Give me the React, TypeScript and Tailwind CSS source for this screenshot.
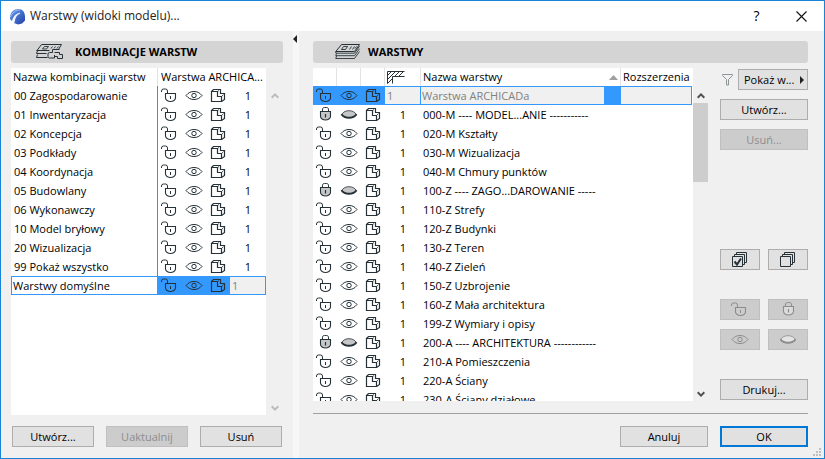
import { useState } from "react";
import type { ReactNode } from "react";
import clsx from "clsx";

const COMBINATIONS = [
  "00 Zagospodarowanie",
  "01 Inwentaryzacja",
  "02 Koncepcja",
  "03 Podkłady",
  "04 Koordynacja",
  "05 Budowlany",
  "06 Wykonawczy",
  "10 Model bryłowy",
  "20 Wizualizacja",
  "99 Pokaż wszystko",
];

type Layer = { name: string; locked?: boolean };

const LAYERS: Layer[] = [
  { name: "000-M ---- MODEL...ANIE -----------", locked: true },
  { name: "020-M Kształty" },
  { name: "030-M Wizualizacja" },
  { name: "040-M Chmury punktów" },
  { name: "100-Z ---- ZAGO...DAROWANIE -----", locked: true },
  { name: "110-Z Strefy" },
  { name: "120-Z Budynki" },
  { name: "130-Z Teren" },
  { name: "140-Z Zieleń" },
  { name: "150-Z Uzbrojenie" },
  { name: "160-Z Mała architektura" },
  { name: "199-Z Wymiary i opisy" },
  { name: "200-A ---- ARCHITEKTURA ------------", locked: true },
  { name: "210-A Pomieszczenia" },
  { name: "220-A Ściany" },
  { name: "230-A Ściany działowe" },
];

export default function App() {
  return (
    <main className="relative flex h-screen flex-col overflow-hidden border border-[#1883d7] bg-[#f0f0f0] font-['Open_Sans','Noto_Sans',sans-serif] text-[11px] leading-4 text-black">
      <TitleBar />
      <div className="flex min-h-0 flex-1">
        <CombinationsPane />
        <div className="w-1.5 shrink-0 bg-[#f7f7f7] pt-1">
          <svg width="6" height="8" viewBox="0 0 6 8" aria-hidden="true">
            <path d="M4 0v8L0 4z" fill="#222" />
          </svg>
        </div>
        <LayersPane />
      </div>
      <ResizeGrip />
    </main>
  );
}

function TitleBar() {
  return (
    <header className="flex h-[30px] shrink-0 items-center bg-white pl-2 text-[12px]">
      <Logo />
      <h1 className="ml-1 flex-1 text-[#222]">Warstwy (widoki modelu)...</h1>
      <button className="w-[45px] text-center text-[14px] text-black" aria-label="Pomoc">
        ?
      </button>
      <button className="flex h-full w-[45px] items-center justify-center" aria-label="Zamknij">
        <svg width="11" height="11" viewBox="0 0 11 11" stroke="#111" strokeWidth="1.1">
          <path d="M.5.5l10 10M10.5.5l-10 10" />
        </svg>
      </button>
    </header>
  );
}

function CombinationsPane() {
  return (
    <section className="flex w-[292px] shrink-0 flex-col px-2.5 pt-2.5 pb-[11px]">
      <PaneTitle icon={<CombinationsIcon />}>KOMBINACJE WARSTW</PaneTitle>
      <div className="mt-[5px] flex min-h-0 flex-1">
        <div className="min-h-0 flex-1 overflow-hidden bg-white">
          <table className="w-full table-fixed border-separate border-spacing-0">
            <colgroup>
              <col />
              <col className="w-6" />
              <col className="w-6" />
              <col className="w-6" />
              <col className="w-9" />
            </colgroup>
            <thead>
              <tr className="h-[18px] text-left">
                <th className="truncate border-r border-[#e3e3e3] p-0 pl-0.5 font-normal">
                  Nazwa kombinacji warstw
                </th>
                <th colSpan={4} className="truncate p-0 pl-[3px] font-normal">
                  Warstwa ARCHICA...
                </th>
              </tr>
            </thead>
            <tbody>
              {COMBINATIONS.map((name) => (
                <tr key={name} className="h-[19px]">
                  <td className="truncate border-r border-[#808080] p-0 pl-[3px]">{name}</td>
                  <StateCells />
                  <td className="p-0 text-center">1</td>
                </tr>
              ))}
              <tr className="h-[19px]">
                <td className="border border-[#3399ff] p-0 pl-px">Warstwy domyślne</td>
                <StateCells selected />
                <td className="border-y border-r border-[#3399ff] bg-[#f0f0f0] p-0">
                  <input
                    className="block h-[17px] w-full pl-0.5 text-[#808080]"
                    aria-label="Priorytet kombinacji"
                    defaultValue="1"
                  />
                </td>
              </tr>
            </tbody>
          </table>
        </div>
        <div className="flex w-[17px] shrink-0 flex-col items-center justify-between pt-[25px] pb-1">
          <Chevron up color="#bcbcbc" />
          <Chevron color="#bcbcbc" />
        </div>
      </div>
      <div className="mt-[11px] grid grid-cols-3 gap-3 px-px">
        <Button>Utwórz...</Button>
        <Button disabled>Uaktualnij</Button>
        <Button>Usuń</Button>
      </div>
    </section>
  );
}

function LayersPane() {
  return (
    <section className="flex min-w-0 flex-1 flex-col pt-2.5 pr-4 pb-[11px] pl-3.5">
      <PaneTitle icon={<LayersIcon />}>WARSTWY</PaneTitle>
      <div className="mt-[5px] flex min-h-0 flex-1 gap-3">
        <div className="flex min-h-0 min-w-0 flex-1">
          <LayerTable />
          <div className="flex w-[15px] shrink-0 flex-col items-center pt-[25px] pb-1">
            <Chevron up color="#505050" />
            <div className="mt-1 h-[79px] w-full bg-[#cdcdcd]" />
            <div className="flex-1" />
            <Chevron color="#505050" />
          </div>
        </div>
        <SideTools />
      </div>
      <div className="mt-3 flex justify-end gap-3 border-t border-[#a0a0a0] pt-3">
        <Button className="w-[88px]">Anuluj</Button>
        <Button className="w-[88px]" primary>
          OK
        </Button>
      </div>
    </section>
  );
}

function LayerTable() {
  return (
    <div className="min-w-0 flex-1 overflow-hidden bg-white pr-px">
      <table className="w-full table-fixed border-separate border-spacing-0">
        <colgroup>
          <col className="w-6" />
          <col className="w-6" />
          <col className="w-6" />
          <col className="w-9" />
          <col />
          <col className="w-[71px]" />
        </colgroup>
        <thead>
          <tr className="h-[18px] text-left">
            <th className="border-r border-[#e3e3e3] p-0" aria-label="Blokada" />
            <th className="border-r border-[#e3e3e3] p-0" aria-label="Widoczność" />
            <th className="border-r border-[#e3e3e3] p-0" aria-label="Tryb 3D" />
            <th className="border-r border-[#e3e3e3] p-0 pl-0.5" aria-label="Przecinanie">
              <HatchIcon />
            </th>
            <th className="border-r border-[#e3e3e3] p-0 pl-0.5 font-normal">
              <span className="flex items-center justify-between pr-0.5">
                Nazwa warstwy
                <svg width="9" height="5" viewBox="0 0 9 5" aria-hidden="true">
                  <path d="M4.5 0L9 5H0z" fill="#a0a0a0" />
                </svg>
              </span>
            </th>
            <th className="p-0 pl-0.5 font-normal">Rozszerzenia</th>
          </tr>
        </thead>
        <tbody>
          <tr className="h-[19px] text-[#808080]">
            <StateCells selected />
            <td className="border border-l-0 border-[#3399ff] bg-[#f0f0f0] p-0">
              <input
                className="block h-[17px] w-full pl-0.5"
                aria-label="Numer przecinania"
                defaultValue="1"
              />
            </td>
            <td className="border-y border-r-[17px] border-[#3399ff] bg-[#f0f0f0] p-0">
              <input
                className="block h-[17px] w-full pl-px"
                aria-label="Nazwa warstwy"
                defaultValue="Warstwa ARCHICADa"
              />
            </td>
            <td className="border border-l-0 border-[#3399ff] bg-[#f0f0f0] p-0">
              <input className="block h-[17px] w-full pl-0.5" aria-label="Rozszerzenie" />
            </td>
          </tr>
          {LAYERS.map((layer) => (
            <tr key={layer.name} className="h-[19px]">
              <StateCells locked={layer.locked} />
              <td className="p-0 text-center">1</td>
              <td className="p-0 pl-0.5 whitespace-nowrap">{layer.name}</td>
              <td className="p-0" />
            </tr>
          ))}
        </tbody>
      </table>
    </div>
  );
}

function SideTools() {
  return (
    <div className="flex w-[88px] shrink-0 flex-col py-px">
      <div className="flex flex-col gap-[9px]">
        <div className="flex items-center justify-between pl-0.5">
          <svg width="11" height="13" viewBox="0 0 11 13" fill="none" stroke="#8f9496" aria-hidden="true">
            <path d="M.5 1.500h10v1L6.500 6.500v5.500h-2V6.500l-4-4z" />
          </svg>
          <Button className="flex w-[70px] items-center justify-between pr-[3px] pl-[5px]">
            Pokaż w...
            <svg width="4" height="8" viewBox="0 0 4 8" aria-hidden="true">
              <path d="M0 0l4 4-4 4z" fill="#222" />
            </svg>
          </Button>
        </div>
        <Button>Utwórz...</Button>
        <Button disabled>Usuń...</Button>
      </div>
      <div className="mt-auto grid grid-cols-2 gap-x-2">
        <Button className="mb-[29px]" label="Zaznacz wszystko">
          <StackIcon checked />
        </Button>
        <Button className="mb-[29px]" label="Odznacz wszystko">
          <StackIcon />
        </Button>
        <Button className="mb-[9px]" disabled label="Odblokuj">
          <LockOpenIcon />
        </Button>
        <Button className="mb-[9px]" disabled label="Zablokuj">
          <LockIcon fill="#dcdcdc" />
        </Button>
        <Button disabled label="Pokaż">
          <EyeIcon />
        </Button>
        <Button disabled label="Ukryj">
          <EyeClosedIcon fill="#e4e4e4" />
        </Button>
      </div>
      <Button className="mt-[29px]">Drukuj...</Button>
    </div>
  );
}

function PaneTitle({ icon, children }: { icon: ReactNode; children: ReactNode }) {
  return (
    <h2 className="flex h-[22px] shrink-0 items-center rounded-[3px] bg-[#d4d4d4] pl-[22px] font-bold">
      {icon}
      {children}
    </h2>
  );
}

function Button({
  children,
  className,
  disabled,
  primary,
  label,
}: {
  children: ReactNode;
  className?: string;
  disabled?: boolean;
  primary?: boolean;
  label?: string;
}) {
  return (
    <button
      disabled={disabled}
      aria-label={label}
      className={clsx(
        "h-[21px]",
        label && "flex items-center justify-center",
        disabled
          ? "border border-[#bfbfbf] bg-[#cccccc] text-[#8c8c8c]"
          : primary
            ? "border-2 border-[#0078d7] bg-[#e1e1e1]"
            : "border border-[#adadad] bg-[#e1e1e1]",
        className
      )}
    >
      {children}
    </button>
  );
}

function StateCells({ locked = false, selected }: { locked?: boolean; selected?: boolean }) {
  const [isLocked, setLocked] = useState(locked);
  const [hidden, setHidden] = useState(locked);
  const cell = clsx("p-0 text-[#263238]", selected && "bg-[#3399ff]");
  const btn = "flex h-[19px] w-full items-center justify-center";

  return (
    <>
      <td className={cell}>
        <button className={btn} aria-label="Blokada" onClick={() => setLocked(!isLocked)}>
          {isLocked ? <LockIcon /> : <LockOpenIcon />}
        </button>
      </td>
      <td className={cell}>
        <button className={btn} aria-label="Widoczność" onClick={() => setHidden(!hidden)}>
          {hidden ? <EyeClosedIcon /> : <EyeIcon />}
        </button>
      </td>
      <td className={cell}>
        <button className={btn} aria-label="Tryb 3D">
          <SolidIcon />
        </button>
      </td>
    </>
  );
}

function Chevron({ up, color }: { up?: boolean; color: string }) {
  return (
    <svg width="8" height="6" viewBox="0 0 8 6" fill="none" stroke={color} strokeWidth="2" className="shrink-0">
      <path d={up ? "M.7 4.7L4 1.4l3.3 3.3" : "M.7 1.3L4 4.6l3.3-3.3"} />
    </svg>
  );
}

function Icon({ children }: { children: ReactNode }) {
  return (
    <svg width="18" height="17" viewBox="0 0 18 17" fill="none" stroke="currentColor" aria-hidden="true">
      {children}
    </svg>
  );
}

function LockOpenIcon() {
  return (
    <Icon>
      <path d="M.5 5V4a2 2 0 0 1 2-2h2a2 2 0 0 1 2 2v2" />
      <path d="M4.5 6.500h10v4.500c0 2-2.500 3.500-5 3.500s-5-1.500-5-3.500z" strokeWidth="1.1" />
      <path d="M9.500 9v3" />
    </Icon>
  );
}

function LockIcon({ fill = "#c6c6c6" }: { fill?: string }) {
  return (
    <Icon>
      <path d="M6.500 6V4a2 2 0 0 1 2-2.500h2a2 2 0 0 1 2 2.500v2" />
      <path d="M4.500 5.500h10v5c0 2-2.500 3.500-5 3.500s-5-1.500-5-3.500z" fill={fill} strokeWidth="1.1" />
      <path d="M9.500 8v3.500" strokeWidth="1.2" />
    </Icon>
  );
}

function EyeIcon() {
  return (
    <Icon>
      <path d="M1 8.500C3.500 5.500 6 4.500 9 4.500s5.500 1 8 4c-2.500 3-5 4-8 4s-5.500-1-8-4z" />
      <circle cx="9" cy="8.500" r="2.200" />
    </Icon>
  );
}

function EyeClosedIcon({ fill = "#c6c6c6" }: { fill?: string }) {
  return (
    <Icon>
      <path d="M1.500 8.500c2-2.800 4.500-3.800 7.500-3.800s5.500 1 7.500 3.800c-2 2.500-4.500 3-7.500 3s-5.500-.5-7.500-3z" fill={fill} strokeWidth=".8" />
      <path d="M1.500 8.200c1.800 2.700 4.500 3.600 7.500 3.600s5.700-.9 7.500-3.600" strokeWidth="2" />
    </Icon>
  );
}

// bryła z narożnym wycięciem: ściana przednia i odsunięta krawędź tylna
function SolidIcon() {
  return (
    <Icon>
      <path d="M2.500 4.500h6v5h4v5h-10z" strokeWidth="1.2" />
      <path d="M2.500 4.500l2-2h7v4h4v6l-3 2" strokeWidth="1.2" />
      <path d="M8.500 4.500l1.500-1M12.500 9.500l2-2" strokeWidth=".8" />
    </Icon>
  );
}

function HatchIcon() {
  return (
    <svg width="18" height="13" viewBox="0 0 18 13" fill="none" stroke="#263238" aria-hidden="true">
      <path d="M17.500.5H.5v12M5.500 12.500v-7h12" />
      <path d="M.5 4.500l4-4M.5 8.500l8-8M.5 12.500l5-5M7.500 5.500l5-5M11.500 5.500l5-5" />
    </svg>
  );
}

function StackIcon({ checked }: { checked?: boolean }) {
  return (
    <svg width="16" height="16" viewBox="0 0 16 16" fill="none" stroke="#263238" aria-hidden="true">
      <path d="M4.500 2.500v-2h10v10h-2" />
      <path d="M2.500 4.500v-2h10v10h-2" />
      <path d="M.5 4.500h10v10H.5z" />
      {checked && <path d="M2.500 9.500l2.500 3 4-6" strokeWidth="2" />}
    </svg>
  );
}

function LayersIcon() {
  return (
    <svg width="26" height="16" viewBox="0 0 26 16" fill="none" stroke="#263238" className="mr-[7px]" aria-hidden="true">
      <path d="M6.500.5h18l-5 7H.8z" />
      <path d="M8.500 2.500h4l-2 3h-4zM16.500 2.500l-2 3M19.500 2.500l-2 3M21.500 2.500l-1.500 2" strokeWidth=".9" />
      <path d="M.8 7.500v1.700h18.700l5-7M1.500 9.500l-.7 2.200h18.700l5-7M1.500 12l-.7 2.500h18.700l5-7" strokeWidth=".9" />
    </svg>
  );
}

function CombinationsIcon() {
  return (
    <svg width="28" height="16" viewBox="0 0 28 16" fill="none" stroke="#263238" className="ml-[3px] mr-[11px]" aria-hidden="true">
      <path d="M1 6.500L5.500.5h20l-3 5" />
      <path d="M8.500 2.500h4l-2 2.500h-4zM16.500 2.500l-1.500 2M19.500 2.500L18 4.500M22.500 2.500L21 4.500" strokeWidth=".9" />
      <path d="M.5 6.500h13M1.500 7L.5 9.500h10M1.500 10.500l-1 3h11" />
      <path d="M23.500 5.500h-7v3h-3a1.500 1.500 0 0 0-1.500 1.500v2.500a1.500 1.500 0 0 0 1.500 1.500h5v-3" />
      <path d="M18.500 8.500h5v2h3v4h-5v-2h-3" />
    </svg>
  );
}

function Logo() {
  return (
    <svg width="17" height="17" viewBox="0 0 17 17" aria-hidden="true">
      <defs>
        <linearGradient id="arch" x1="0" y1="0" x2="1" y2="1">
          <stop offset="0" stopColor="#6d9df0" />
          <stop offset="1" stopColor="#1b3fa5" />
        </linearGradient>
      </defs>
      <path d="M1 10C1 4 5 1 9.500 1 13.500 1 16 4 16 8.500v4L13 15.500 9 16.500l-4-1.500c0-4 2-8 5-10-4 1-6 4.500-7 8-1-.5-2-1.500-2-3z" fill="url(#arch)" />
      <path d="M5 14.500C5.500 9.500 8 6 11 5" fill="none" stroke="#e4eeff" strokeWidth="1.3" />
      <path d="M1.500 9C3 4.500 7 2 11 2" fill="none" stroke="#9cc0f8" />
    </svg>
  );
}

function ResizeGrip() {
  return (
    <svg width="8" height="8" viewBox="0 0 8 8" fill="#bfbfbf" className="absolute right-[3px] bottom-0.5" aria-hidden="true">
      <path d="M6 0h2v2H6zM3 3h2v2H3zM6 3h2v2H6zM0 6h2v2H0zM3 6h2v2H3zM6 6h2v2H6z" />
    </svg>
  );
}
